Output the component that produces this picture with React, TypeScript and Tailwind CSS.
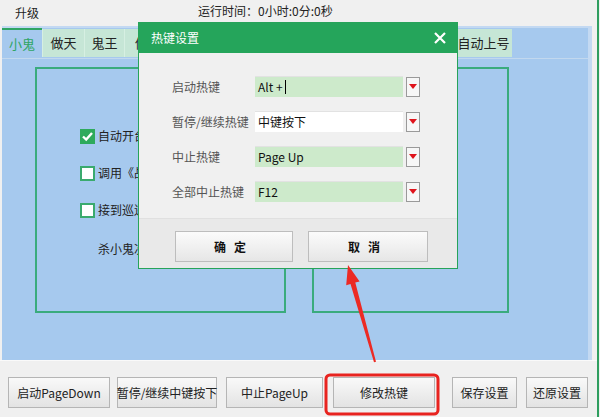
import React from 'react';

const font = { fontFamily: '"Microsoft YaHei", "Noto Sans CJK SC", sans-serif' };

// tabs across the top of the blue panel (widths follow the screenshot)
const tabs = [
  { name: '小鬼', w: 'w-[40px]' },
  { name: '做天', w: 'w-[42px]' },
  { name: '鬼王', w: 'w-[40px]' },
  { name: '做任务', w: 'w-[60px]' },
  { name: '打宝图', w: 'w-[60px]' },
  { name: '挖宝', w: 'w-[50px]' },
  { name: '副本', w: 'w-[50px]' },
  { name: '跑商', w: 'w-[50px]' },
  { name: '其他', w: 'w-[60px]' },
  { name: '自动上号', w: 'w-[58px]' },
];

const hotkeys = [
  { label: '启动热键', value: 'Alt + ', green: true, caret: true },
  { label: '暂停/继续热键', value: '中键按下', green: false },
  { label: '中止热键', value: 'Page Up', green: true },
  { label: '全部中止热键', value: 'F12', green: true },
];

const bottomButtons = [
  { text: '启动PageDown', cls: 'ml-[8px] w-[102px]' },
  { text: '暂停/继续中键按下', cls: 'ml-[7px] w-[100px]' },
  { text: '中止PageUp', cls: 'ml-[9px] w-[97px]' },
  { text: '修改热键', cls: 'ml-[10px] w-[102px]' },
  { text: '保存设置', cls: 'ml-[17px] w-[65px]' },
  { text: '还原设置', cls: 'ml-[9px] w-[62px]' },
];

const CheckBox: React.FC<{ checked?: boolean }> = ({ checked }) => (
  <div
    className={
      checked
        ? 'w-[15px] h-[15px] bg-[#2eaa5c] flex items-center justify-center'
        : 'w-[15px] h-[15px] bg-white border-2 border-[#3aaa6e]'
    }
  >
    {checked && (
      <svg width="13" height="13" viewBox="0 0 13 13">
        <path d="M2 6.5 L5.2 9.6 L11 3" stroke="white" strokeWidth="2.4" fill="none" />
      </svg>
    )}
  </div>
);

const HotkeyDialog: React.FC = () => (
  <div className="absolute left-[138px] top-[22px] w-[320px] h-[247px] border border-[#27a35a] bg-[#f0f0f0] flex flex-col">
    <div className="h-[30px] bg-[#25a55b] flex items-center justify-between pl-[12px] pr-[10px] text-white text-[12px]">
      <span>热键设置</span>
      <svg width="14" height="14" viewBox="0 0 14 14">
        <path d="M2 2 L12 12 M12 2 L2 12" stroke="white" strokeWidth="2.2" />
      </svg>
    </div>
    <div className="flex flex-col gap-[14px] pt-[23px] pl-[33px] h-[165px]">
      {hotkeys.map((h) => (
        <div key={h.label} className="flex items-center h-[21px]">
          <span className="w-[83px] text-[12px] text-[#555]">{h.label}</span>
          <div
            className={
              h.green
                ? 'w-[148px] h-[21px] bg-[#cdeacb] border-t border-[#e2e2e2] flex items-center pl-[3px] text-[12px] text-[#111]'
                : 'w-[148px] h-[21px] bg-white border-t border-[#e2e2e2] flex items-center pl-[3px] text-[12px] text-[#111]'
            }
          >
            {h.value}
            {h.caret && <span className="inline-block w-px h-[14px] bg-black ml-[2px]" />}
          </div>
          <div className="ml-[3px] w-[14px] h-[20px] border border-[#9a9a9a] bg-[#f7f7f7] flex items-center justify-center">
            <svg width="8" height="5" viewBox="0 0 8 5">
              <path d="M0 0 L8 0 L4 5 Z" fill="#e0141c" />
            </svg>
          </div>
        </div>
      ))}
    </div>
    <div className="flex-1 bg-[#e9e9e9] border-t border-[#e0e0e0] flex items-start pt-[12px] pl-[36px] gap-[15px]">
      <div className="w-[118px] h-[31px] border border-[#bdbdbd] bg-gradient-to-b from-[#fbfbfb] to-[#e6e6e6] flex items-center justify-center text-[12px] font-bold text-[#111] tracking-[8px]">
        确定
      </div>
      <div className="w-[120px] h-[31px] border border-[#bdbdbd] bg-gradient-to-b from-[#fbfbfb] to-[#e6e6e6] flex items-center justify-center text-[12px] font-bold text-[#111] tracking-[8px]">
        取消
      </div>
    </div>
  </div>
);

const App: React.FC = () => {
  return (
    <div className="relative w-[600px] h-[417px] overflow-hidden bg-[#f0f0f0] flex text-[#222]" style={font}>
      <div className="w-[597px] flex flex-col">
        {/* top bar */}
        <div className="h-[26px] flex items-center text-[12px]">
          <span className="ml-[15px]">升级</span>
          <span className="ml-[159px] -mt-[4px]">运行时间：0小时:0分:0秒</span>
        </div>

        {/* tab panel */}
        <div className="ml-[2px] w-[590px] h-[334px] bg-[#a6c9ee] border-t-2 border-r-[4px] border-[#c3d9f2] flex flex-col">
          <div className="h-[31px] flex items-end border-b border-[#c2d8ee] pb-[1px]">
            {tabs.map((t, i) => (
              <div
                key={t.name}
                className={
                  i === 0
                    ? `${t.w} h-[29px] border-t-[2px] border-[#2fa565] bg-[#a6c9ee] text-[#2fa565] text-[13px] flex items-center justify-center`
                    : `${t.w} h-[28px] bg-[#c6e6d6] border-l border-[#d6efe2] text-[13px] text-[#222] flex items-center justify-center`
                }
              >
                {t.name}
              </div>
            ))}
          </div>

          <div className="flex pt-[8px] pl-[33px]">
            <div className="w-[251px] h-[246px] border-2 border-[#3aab7d] flex flex-col pl-[43px] pt-[59px] text-[12px]">
              <div className="flex items-center gap-[3px] h-[16px]">
                <CheckBox checked />
                <span>自动开台打鬼</span>
              </div>
              <div className="flex items-center gap-[3px] h-[16px] mt-[21px]">
                <CheckBox />
                <span>调用《战斗助手》</span>
              </div>
              <div className="flex items-center gap-[3px] h-[16px] mt-[21px]">
                <CheckBox />
                <span>接到巡逻任务</span>
              </div>
              <div className="ml-[18px] mt-[22px]">杀小鬼次数</div>
            </div>
            <div className="ml-[26px] w-[197px] h-[246px] border-2 border-[#3aab7d]" />
          </div>
        </div>

        {/* bottom buttons */}
        <div className="flex-1 border-t border-[#fafafa] flex items-start pt-[16px]">
          {bottomButtons.map((b) => (
            <div
              key={b.text}
              className={`${b.cls} h-[31px] border border-[#b5b5b5] bg-gradient-to-b from-[#f9f9f9] to-[#e3e3e3] flex items-center justify-center text-[12px] text-[#222] whitespace-nowrap`}
            >
              {b.text}
            </div>
          ))}
        </div>
      </div>
      <div className="w-[2px] bg-[#2f9e5f]" />
      <div className="flex-1 bg-[#f0f0f0]" />

      <HotkeyDialog />

      {/* red annotation */}
      <svg className="absolute left-0 top-0 pointer-events-none" width="600" height="417">
        <polygon
          points="348,265 359.6,281.4 355.3,282.6 376,361.7 374,362.3 350.5,284 346.2,285.2"
          fill="#ec2a24"
        />
        <rect x="326" y="375" width="112" height="39" rx="4" fill="none" stroke="#e8231f" strokeWidth="3" />
      </svg>
    </div>
  );
};

export default App;
